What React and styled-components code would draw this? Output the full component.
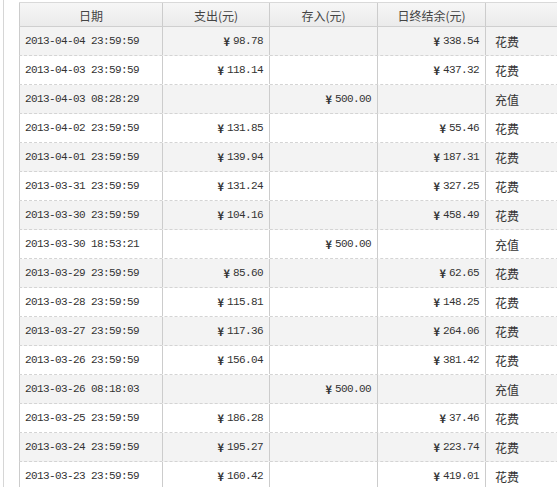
import styled, { createGlobalStyle } from "styled-components";

const GlobalStyle = createGlobalStyle`
  body {
    margin: 0;
    background: #fff;
    font-family: "Liberation Mono", "Noto Sans CJK SC", monospace;
    overflow: hidden;
  }
`;

const Page = styled.div`
  padding: 0 0 0 3px;
  width: 557px;
  height: 487px;
  overflow: hidden;
  box-sizing: border-box;
`;

const Frame = styled.div`
  border-left: 1px solid #d6d6d6;
  padding: 2px 0 0 15px;
  min-height: 487px;
  box-sizing: border-box;
`;

const Grid = styled.div`
  width: 580px;
  border-top: 1px solid #d9d9d9;
`;

const Row = styled.div`
  display: grid;
  grid-template-columns: 143px 107px 108px 108px 114px;
  height: ${({ head }) => (head ? "24px" : "29px")};
  box-sizing: border-box;
  background: ${({ head, shade }) =>
    head
      ? "linear-gradient(#f6f6f6, #ebebeb)"
      : shade
      ? "#f3f3f3"
      : "#fff"};
  border-bottom: ${({ head }) =>
    head ? "1px solid #cfcfcf" : "1px dashed #d4d4d4"};
`;

const Cell = styled.div`
  display: flex;
  align-items: center;
  box-sizing: border-box;
  border-left: 1px solid #cccccc;
  color: #333;
  font-size: 11px;
  letter-spacing: -0.6px;
  white-space: nowrap;
  justify-content: ${({ align }) =>
    align === "right" ? "flex-end" : align === "center" ? "center" : "flex-start"};
  padding: ${({ pad }) => pad || "0 5px"};
`;

const HeadCell = styled(Cell)`
  justify-content: center;
  font-family: "Noto Sans CJK SC", sans-serif;
  font-size: 12px;
  letter-spacing: 0;
  color: #444;
  padding-top: 1px;
`;

const Yen = styled.span`
  font-family: "Noto Sans CJK SC", sans-serif;
  font-weight: bold;
  font-size: 11px;
  margin-right: 3px;
  letter-spacing: 0;
`;

const Kind = styled.span`
  font-family: "Noto Sans CJK SC", sans-serif;
  font-size: 12px;
  letter-spacing: 0;
`;

const rows = [
  ["2013-04-04 23:59:59", "98.78", "", "338.54", "花费"],
  ["2013-04-03 23:59:59", "118.14", "", "437.32", "花费"],
  ["2013-04-03 08:28:29", "", "500.00", "", "充值"],
  ["2013-04-02 23:59:59", "131.85", "", "55.46", "花费"],
  ["2013-04-01 23:59:59", "139.94", "", "187.31", "花费"],
  ["2013-03-31 23:59:59", "131.24", "", "327.25", "花费"],
  ["2013-03-30 23:59:59", "104.16", "", "458.49", "花费"],
  ["2013-03-30 18:53:21", "", "500.00", "", "充值"],
  ["2013-03-29 23:59:59", "85.60", "", "62.65", "花费"],
  ["2013-03-28 23:59:59", "115.81", "", "148.25", "花费"],
  ["2013-03-27 23:59:59", "117.36", "", "264.06", "花费"],
  ["2013-03-26 23:59:59", "156.04", "", "381.42", "花费"],
  ["2013-03-26 08:18:03", "", "500.00", "", "充值"],
  ["2013-03-25 23:59:59", "186.28", "", "37.46", "花费"],
  ["2013-03-24 23:59:59", "195.27", "", "223.74", "花费"],
  ["2013-03-23 23:59:59", "160.42", "", "419.01", "花费"],
];

const Money = ({ value }) =>
  value ? (
    <>
      <Yen>¥</Yen>
      {value}
    </>
  ) : null;

export default function App() {
  return (
    <Page>
      <GlobalStyle />
      <Frame>
        <Grid>
          <Row head>
            <HeadCell>日期</HeadCell>
            <HeadCell>支出(元)</HeadCell>
            <HeadCell>存入(元)</HeadCell>
            <HeadCell>日终结余(元)</HeadCell>
            <HeadCell />
          </Row>
          {rows.map(([date, out, dep, bal, kind], i) => (
            <Row key={i} shade={i % 2 === 0}>
              <Cell>{date}</Cell>
              <Cell align="right" pad="0 6px 0 0">
                <Money value={out} />
              </Cell>
              <Cell align="right" pad="0 6px 0 0">
                <Money value={dep} />
              </Cell>
              <Cell align="right" pad="0 6px 0 0">
                <Money value={bal} />
              </Cell>
              <Cell pad="0 0 0 9px">
                <Kind>{kind}</Kind>
              </Cell>
            </Row>
          ))}
        </Grid>
      </Frame>
    </Page>
  );
}
